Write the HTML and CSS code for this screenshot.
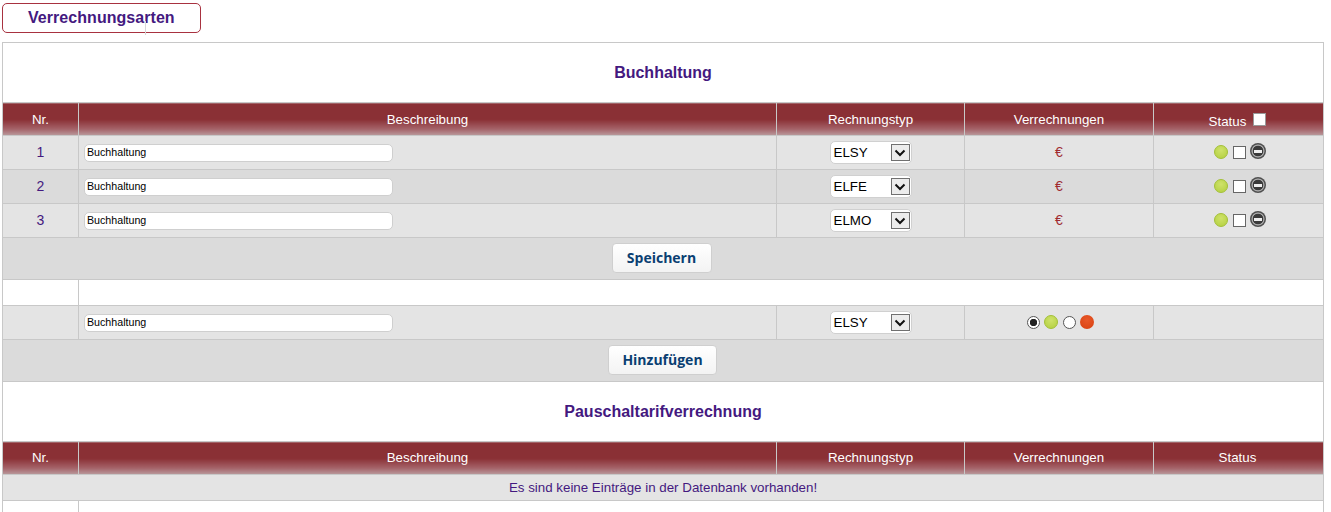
FILE: index.html
```html
<!DOCTYPE html>
<html lang="de">
<head>
<meta charset="utf-8">
<title>Verrechnungsarten</title>
<link rel="stylesheet" href="styles.css">
</head>
<body>
<h1 class="page-title">Verrechnungsarten<span class="cursor"></span></h1>
<table class="grid">
<colgroup><col class="c1"><col class="c2"><col class="c3"><col class="c4"><col class="c5"></colgroup>
<tbody>
<tr class="title"><td colspan="5"><h2>Buchhaltung</h2></td></tr>
<tr class="head first"><th>Nr.</th><th>Beschreibung</th><th>Rechnungstyp</th><th>Verrechnungen</th><th><span class="status-head">Status<span class="box white"></span></span></th></tr>
<tr class="row a"><td class="num">1</td><td><span class="text">Buchhaltung</span></td><td class="mid"><span class="sel"><span class="sv">ELSY</span><span class="arrow"><svg viewBox="0 0 12 8" width="12" height="8"><path d="M1.5 1.5l4.5 4.5 4.5-4.5" fill="none" stroke="#111" stroke-width="2"/></svg></span></span></td><td class="euro">€</td><td class="mid"><span class="st"><span class="dot green"></span><span class="box"></span><span class="stop"></span></span></td></tr>
<tr class="row b"><td class="num">2</td><td><span class="text">Buchhaltung</span></td><td class="mid"><span class="sel"><span class="sv">ELFE</span><span class="arrow"><svg viewBox="0 0 12 8" width="12" height="8"><path d="M1.5 1.5l4.5 4.5 4.5-4.5" fill="none" stroke="#111" stroke-width="2"/></svg></span></span></td><td class="euro">€</td><td class="mid"><span class="st"><span class="dot green"></span><span class="box"></span><span class="stop"></span></span></td></tr>
<tr class="row a"><td class="num">3</td><td><span class="text">Buchhaltung</span></td><td class="mid"><span class="sel"><span class="sv">ELMO</span><span class="arrow"><svg viewBox="0 0 12 8" width="12" height="8"><path d="M1.5 1.5l4.5 4.5 4.5-4.5" fill="none" stroke="#111" stroke-width="2"/></svg></span></span></td><td class="euro">€</td><td class="mid"><span class="st"><span class="dot green"></span><span class="box"></span><span class="stop"></span></span></td></tr>
<tr class="btnrow"><td colspan="5"><span class="btn save">Speichern</span></td></tr>
<tr class="gap"><td></td><td colspan="4"></td></tr>
<tr class="row a"><td></td><td><span class="text">Buchhaltung</span></td><td class="mid"><span class="sel"><span class="sv">ELSY</span><span class="arrow"><svg viewBox="0 0 12 8" width="12" height="8"><path d="M1.5 1.5l4.5 4.5 4.5-4.5" fill="none" stroke="#111" stroke-width="2"/></svg></span></span></td><td class="mid"><span class="st wide"><span class="radio on"></span><span class="dot green"></span><span class="radio"></span><span class="dot red"></span></span></td><td></td></tr>
<tr class="btnrow add"><td colspan="5"><span class="btn plus">Hinzufügen</span></td></tr>
<tr class="title"><td colspan="5"><h2>Pauschaltarifverrechnung</h2></td></tr>
<tr class="head"><th>Nr.</th><th>Beschreibung</th><th>Rechnungstyp</th><th>Verrechnungen</th><th class="status-plain">Status</th></tr>
<tr class="msg"><td colspan="5">Es sind keine Einträge in der Datenbank vorhanden!</td></tr>
<tr class="tail"><td></td><td colspan="4"></td></tr>
</tbody>
</table>
</body>
</html>
```
FILE: styles.css
```css
html, body { margin: 0; padding: 0; background: #fff; overflow: hidden; }
body { height: 512px; font-family: "Liberation Sans", Arial, sans-serif; }
.page-title {
  position: relative;
  box-sizing: border-box; width: 199px; height: 30px; margin: 3px 0 9px 2px;
  border: 1px solid #a83240; border-radius: 5px;
  font-size: 16px; line-height: 27px; font-weight: bold; color: #44197f;
  padding-left: 25px; letter-spacing: 0.05px;
}
.cursor { position: absolute; left: 142px; top: 17px; width: 1px; height: 14px; background: #d8d8d8; }
.grid { border-collapse: collapse; table-layout: fixed; width: 1321px; margin-left: 2px; }
.grid td, .grid th { border: 1px solid #c8c8c8; padding: 0; }
.c1 { width: 76px; } .c2 { width: 698px; } .c3 { width: 188px; } .c4 { width: 189px; } .c5 { width: 170px; }
.title td { height: 59px; text-align: center; background: #fff; }
.title h2 { margin: 0; font-size: 16px; font-weight: bold; color: #44197f; }
.head th {
  height: 30px; font-size: 13.33px; font-weight: normal; color: #fff; text-align: center;
  padding-bottom: 2px;
  background: linear-gradient(#8a3035 0, #8a3035 50%, #a56369 80%, #b99a9d 100%);
}
.head.first th { height: 32px; padding-bottom: 0; }
.head .status-plain { padding-right: 2px; }
.status-head { display: inline-flex; align-items: center; gap: 7px; position: relative; top: 2px; left: -1px; }
.row td { height: 33px; }
.row.a td { background: #e4e4e4; }
.row.b td { background: #dbdbdb; }
.row .num, .row .euro { height: 31px; padding-bottom: 2px; }
.num { text-align: center; font-size: 14px; color: #44197f; }
.mid { text-align: center; }
.euro { text-align: center; font-size: 14px; color: #a02a30; }
.text {
  display: block; box-sizing: border-box; width: 309px; height: 18px; margin-left: 5px;
  background: #fff; border: 1px solid #cfcfcf; border-radius: 5px;
  font-size: 10.67px; line-height: 15px; color: #000; padding-left: 2px;
}
.sel {
  display: inline-flex; box-sizing: border-box; width: 82px; height: 23px; align-items: center;
  justify-content: space-between; vertical-align: middle;
  background: #fff; border: 1px solid #d0d0d0; border-radius: 5px; padding: 0 1px 0 3px;
  font-size: 13.33px; color: #000;
}
.arrow {
  display: flex; box-sizing: border-box; width: 19px; height: 17px; align-items: center; justify-content: center;
  background: #ececec; border: 1px solid #707070;
}
.st { display: inline-flex; align-items: center; gap: 5px; vertical-align: middle; position: relative; top: -1px; left: 1px; }
.st .stop { margin-left: -1px; position: relative; top: -1px; }
.dot { display: inline-block; box-sizing: border-box; width: 14px; height: 14px; border-radius: 50%; }
.green { background: radial-gradient(circle at 50% 35%, #cfe26a, #b2cf3e); border: 1px solid #a4c03a; }
.red { background: radial-gradient(circle at 50% 35%, #e8582a, #d8400f); }
.box { display: inline-block; box-sizing: border-box; width: 13px; height: 13px; background: #fff; border: 1px solid #666; }
.box.white { border-color: #999; position: relative; top: -2px; }
.stop {
  display: inline-block; box-sizing: border-box; width: 16px; height: 16px; border-radius: 50%;
  background: linear-gradient(#eee, #eee) center / 8px 3px no-repeat,
    radial-gradient(circle, #3a3a3a 0, #3a3a3a 5px, #a8a8a8 5.6px, #a8a8a8 6.2px, #505050 6.8px);
}
.wide { gap: 4px; top: -1px; left: 1px; }
.wide .radio + .dot + .radio { margin-left: 1px; }
.wide .dot.red { margin-left: 0; }
.radio { display: inline-block; box-sizing: border-box; width: 13px; height: 13px; border-radius: 50%; background: #fff; border: 1px solid #555; }
.radio.on { background: radial-gradient(circle, #222 0, #222 3.4px, #fff 4px); }
.btnrow td { height: 40px; text-align: center; background: #dbdbdb; padding-bottom: 1px; }
.btn {
  display: inline-block; box-sizing: border-box; height: 30px; line-height: 28px; vertical-align: middle;
  border: 1px solid #cfcfcf; border-radius: 4px; background: linear-gradient(#fff, #f3f3f3);
  font-family: "Open Sans", sans-serif; font-size: 14px; font-weight: 700; color: #0a3f72;
  text-align: center;
}
.save { width: 100px; margin-left: -3px; }
.plus { width: 109px; margin-left: -1px; }
.gap td { height: 25px; background: #fff; }
.msg td { height: 25px; text-align: center; font-size: 13.33px; color: #44197f; background: #e4e4e4; }
.grid .tail td { height: 11px; background: #fff; border-bottom: none; }
```
